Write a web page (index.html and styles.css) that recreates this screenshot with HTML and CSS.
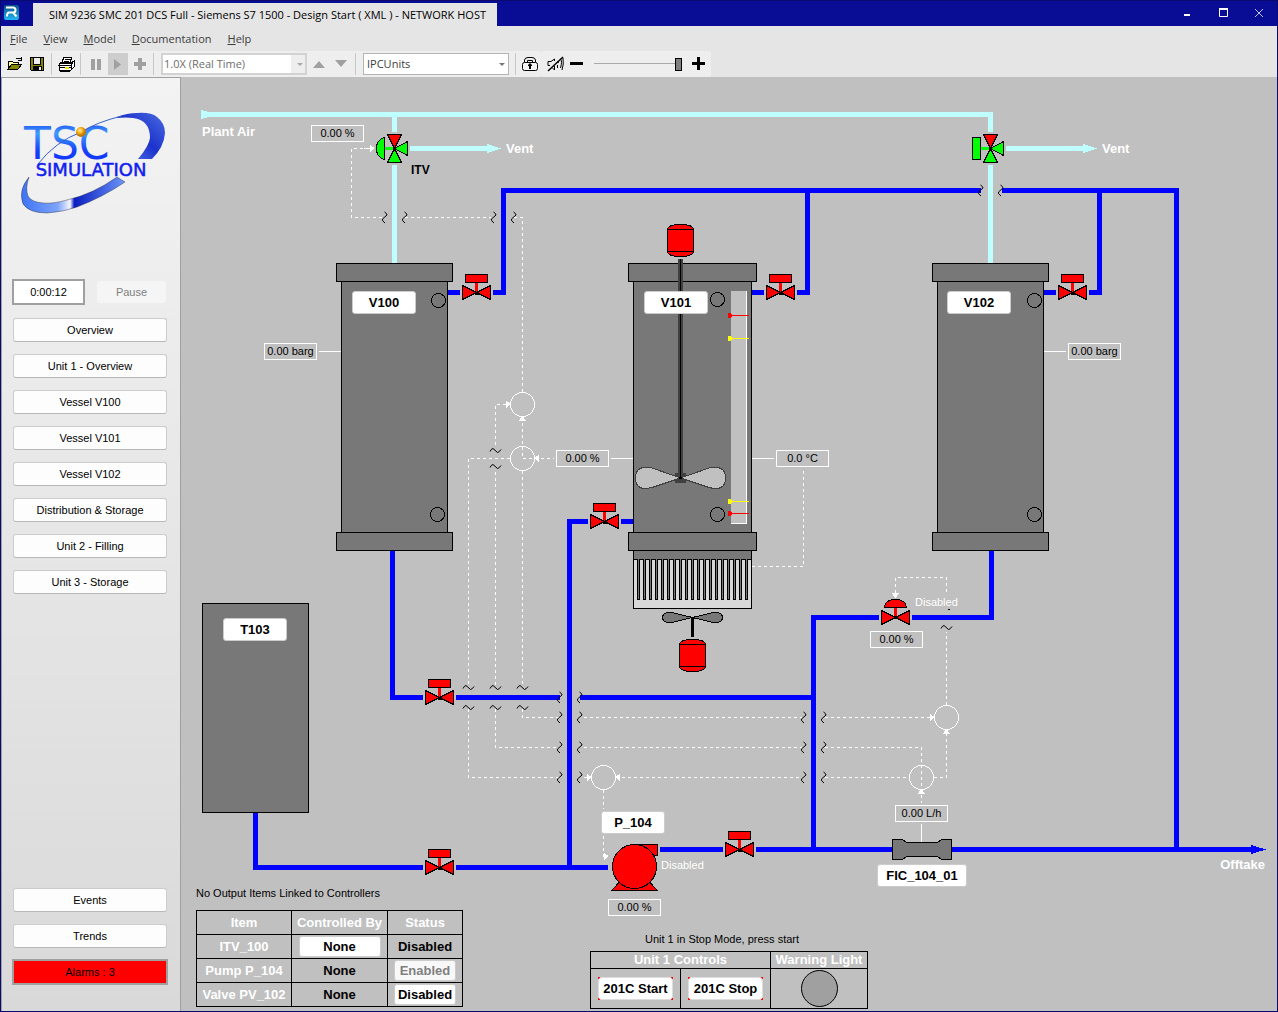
FILE: index.html
```html
<!DOCTYPE html>
<html lang="en">
<head>
<meta charset="utf-8">
<title>SIM 9236 SMC 201 DCS Full</title>
<link rel="stylesheet" href="styles.css">
</head>
<body>
<div class="window">
  <header class="titlebar">
    <svg class="app-icon" width="32" height="23" viewBox="0 0 32 23" aria-hidden="true">
      <defs><linearGradient id="appBlue" x1="0" y1="0" x2="0" y2="1"><stop offset="0" stop-color="#0b4f86"/><stop offset="1" stop-color="#22b8f4"/></linearGradient></defs>
      <rect x="3" y="2" width="15" height="15" rx="2" fill="url(#appBlue)"/>
      <path d="M5 4.500H12Q14.500 4.500 14.500 7T12 9.500L15.500 13.500M12 9.500H8Q6 9.500 6 13.500" fill="none" stroke="#fff" stroke-width="2"/>
    </svg>
    <h1 class="title-tab">SIM 9236 SMC 201 DCS Full - Siemens S7 1500 - Design Start ( XML ) - NETWORK HOST</h1>
    <div class="window-buttons">
      <button type="button" aria-label="Minimize"><svg width="10" height="10"><rect x="2" y="6" width="6" height="2" fill="#fff"/></svg></button>
      <button type="button" aria-label="Maximize"><svg width="10" height="10"><path d="M1.500 1v7.500h8V1" fill="none" stroke="#fff"/><rect x="1" y="0" width="9" height="2" fill="#fff"/></svg></button>
      <button type="button" aria-label="Close"><svg width="10" height="10"><path d="M1 1l8 8M9 1l-8 8" stroke="#c3c4ea" fill="none"/></svg></button>
    </div>
  </header>

  <nav class="menubar" aria-label="Menu">
    <a href="#file"><u>F</u>ile</a>
    <a href="#view"><u>V</u>iew</a>
    <a href="#model"><u>M</u>odel</a>
    <a href="#docs"><u>D</u>ocumentation</a>
    <a href="#help"><u>H</u>elp</a>
  </nav>

  <div class="toolbar-row">
    <div class="toolbar">
      <button class="tool" type="button" aria-label="Open">
        <svg width="16" height="14" shape-rendering="crispEdges"><path d="M1 12V4h4l1 1h5v2" fill="#ffff9c" stroke="#000"/><path d="M1 12l4-5h10l-4 5z" fill="#848400" stroke="#000"/><path d="M9 2q3-2 5 0M14 0v3h-3" fill="none" stroke="#000"/></svg>
      </button>
      <button class="tool" type="button" aria-label="Save">
        <svg width="14" height="14" shape-rendering="crispEdges"><path d="M0 0h14v14H1l-1-1z"/><path d="M1 1h12v12H1z" fill="#848400"/><path d="M3 0h8v8H3zM3 9h9v5H3z"/><rect x="4" y="1" width="6" height="6" fill="#eee"/><rect x="9" y="10" width="2" height="3" fill="#eee"/></svg>
      </button>
      <span class="sep"></span>
      <button class="tool" type="button" aria-label="Print">
        <svg width="18" height="16" shape-rendering="crispEdges"><path d="M5 6l2-5h8l-2 5zM2 7h12l3-2v6l-3 3H2z" fill="#fff" stroke="#000"/><path d="M8 3h5M7 5h5M3 6l13 0M1 9h14M2 11h13M14 7v7M17 5l-3 4" fill="none" stroke="#000"/><path d="M8 12h4" stroke="#e8e800" stroke-width="2"/><path d="M3 15h10" stroke="#000" stroke-width="2"/></svg>
      </button>
      <span class="sep"></span>
      <button class="tool" type="button" aria-label="Pause" disabled>
        <svg width="16" height="16"><path d="M4 3h4v11H4zM10 3h4v11h-4z" fill="#a0a0a0"/></svg>
      </button>
      <button class="tool tool-on" type="button" aria-label="Run" disabled>
        <svg width="16" height="16"><path d="M4 3v11l7-5.500z" fill="#a0a0a0"/></svg>
      </button>
      <button class="tool" type="button" aria-label="Step" disabled>
        <svg width="16" height="16"><path d="M7 2h4v4h4v4h-4v4H7v-4H3V6h4z" fill="#a0a0a0"/></svg>
      </button>
      <span class="sep"></span>
      <span class="combo combo-off">
        <select aria-label="Simulation speed" disabled><option>1.0X (Real Time)</option></select>
        <svg width="7" height="4"><path d="M0 0h6L3 3z" fill="#a8a8a8"/></svg>
      </span>
      <button class="tool" type="button" aria-label="Faster" disabled>
        <svg width="14" height="8"><path d="M1 8h12L7 1z" fill="#a0a0a0"/></svg>
      </button>
      <button class="tool" type="button" aria-label="Slower" disabled>
        <svg width="14" height="8"><path d="M1 0h12L7 7z" fill="#a0a0a0"/></svg>
      </button>
      <span class="sep"></span>
      <span class="combo combo-units">
        <select aria-label="Units"><option>IPCUnits</option></select>
        <svg width="7" height="4"><path d="M0 0h6L3 3z" fill="#777"/></svg>
      </span>
      <span class="sep"></span>
      <button class="tool" type="button" aria-label="Lock">
        <svg width="16" height="16"><path d="M2.500 6.500V4Q3 1.500 6 1.500h4q3 0 3.500 2.500v2.500M5.500 6V4.500h5V6" fill="none" stroke="#000"/><rect x=".5" y="6.500" width="15" height="8" rx="2" fill="#f4f4f4" stroke="#000"/><path d="M6 9l2-2 2 2v1H9v3H7v-3H6z" fill="#000"/></svg>
      </button>
    </div>
    <div class="toolbar volume">
      <button class="tool" type="button" aria-label="Mute">
        <svg width="17" height="16"><path d="M1 15L16 1" stroke="#000" stroke-width="1.500"/><path d="M1 9.500V5.500H4L7.500 3V5M1 9.500H3M7.500 10V14L5.500 12M10.500 9v3M13.500 3q2 2 0 9M16 2q1 6-1 12M10.500 5l1 2" fill="none" stroke="#000"/></svg>
      </button>
      <button class="tool" type="button" aria-label="Volume down">
        <svg width="14" height="14"><path d="M0 5h13v3H0z"/></svg>
      </button>
      <input class="slider" type="range" min="0" max="100" value="100" aria-label="Volume">
      <button class="tool" type="button" aria-label="Volume up">
        <svg width="14" height="14"><path d="M5 0h3v5h5v3H8v5H5V8H0V5h5z"/></svg>
      </button>
    </div>
  </div>

  <div class="work">
    <aside class="sidebar">
      <svg class="logo" width="156" height="110" viewBox="12 108 156 110" role="img" aria-label="TSC Simulation">
        <defs>
          <linearGradient id="ringTop" x1="0" y1="1" x2="1" y2="0"><stop offset="0" stop-color="#5b7ff0"/><stop offset=".5" stop-color="#1c33cc"/><stop offset="1" stop-color="#4b6ce0"/></linearGradient>
          <linearGradient id="ringLow" x1="0" x2="1"><stop offset="0" stop-color="#3e74f4"/><stop offset=".35" stop-color="#7ea4fa"/><stop offset=".47" stop-color="#f4f7ff"/><stop offset=".51" stop-color="#0a1ec0"/><stop offset="1" stop-color="#6c96fa"/></linearGradient>
          <linearGradient id="letters" x1="0" y1="0" x2="0" y2="1"><stop offset="0" stop-color="#1030f0"/><stop offset=".3" stop-color="#3f9cff"/><stop offset=".65" stop-color="#1440f8"/><stop offset="1" stop-color="#1030ff"/></linearGradient>
          <radialGradient id="orb" cx=".4" cy=".35"><stop offset="0" stop-color="#fff0b0"/><stop offset=".5" stop-color="#ffb820"/><stop offset="1" stop-color="#c07800"/></radialGradient>
        </defs>
        <path d="M117 117Q127 113 137 113Q151 112 157 117Q165 123 165 133Q164 147 152 159H138Q149 146 150 138Q150 120 133 118Q126 117 117 118z" fill="url(#ringTop)"/>
        <path d="M29 177Q18 190 23 204Q29 213 47 213Q63 212 77 207Q103 197 125 182L117 177Q93 194 67 200Q53 204 43 203Q31 202 28 196Q25 188 29 177z" fill="url(#ringLow)" stroke="#223" stroke-width=".4"/>
        <text class="logo-big" x="24" y="159" fill="url(#letters)">TSC</text>
        <path d="M38 164Q55 142 81 132Q97 122 122 116" fill="none" stroke="#3a62c8" stroke-width="1"/>
        <circle cx="81" cy="132" r="5" fill="url(#orb)"/>
        <text class="logo-small" x="91" y="176" text-anchor="middle">SIMULATION</text>
      </svg>
      <div class="clock-row">
        <output class="clock">0:00:12</output>
        <button class="side-btn pause" type="button" disabled>Pause</button>
      </div>
      <nav class="side-nav" aria-label="Displays">
        <button class="side-btn" type="button">Overview</button>
        <button class="side-btn" type="button">Unit 1 - Overview</button>
        <button class="side-btn" type="button">Vessel V100</button>
        <button class="side-btn" type="button">Vessel V101</button>
        <button class="side-btn" type="button">Vessel V102</button>
        <button class="side-btn" type="button">Distribution &amp; Storage</button>
        <button class="side-btn" type="button">Unit 2 - Filling</button>
        <button class="side-btn" type="button">Unit 3 - Storage</button>
      </nav>
      <div class="side-nav side-foot">
        <button class="side-btn" type="button">Events</button>
        <button class="side-btn" type="button">Trends</button>
      </div>
      <button class="alarms" type="button">Alarms : 3</button>
    </aside>

    <main class="canvas">
      <div class="mimic">
        <svg class="drawing" width="1096" height="934" viewBox="181 77 1096 934" shape-rendering="crispEdges">
          <defs>
            <g id="bowtie" stroke="#000" fill="#f00"><path d="M-14-7V7L0 0zM14-7V7L0 0z"/></g>
            <g id="valve">
              <path d="M0 0V-10" stroke="#f00" stroke-width="3"/>
              <use href="#bowtie"/>
              <rect x="-11" y="-18" width="22" height="8" fill="#f00" stroke="#000"/>
              <rect x="-2" y="-1" width="4" height="3"/>
            </g>
            <g id="threeway" stroke="#000">
              <path d="M-10 0H0" stroke="#0f0" stroke-width="3"/>
              <path d="M-7-14H7L0 0z" fill="#f00"/>
              <path d="M-7 14H7L0 0zM13-7V7L0 0z" fill="#0f0"/>
              <rect x="-1" y="-1" width="2" height="3"/>
            </g>
            <g id="motor" stroke="#000" fill="#f00">
              <path d="M0 5Q0 3 4 1Q8 0 13 0T22 1Q26 3 26 5V27Q26 29 22 31Q18 32 13 32T4 31Q0 29 0 27z"/>
              <path d="M0 5H26M0 27H26"/>
            </g>
            <path id="brkV" d="M0-5.500Q2.500-4 2.500-2.500L-2 1.500Q-3 3 .5 5.500" fill="none" stroke="#000" shape-rendering="auto"/>
            <path id="brkH" d="M-5.500 1Q-4-2-2.500-2L2 2Q3.500 2 5.500-1" fill="none" stroke="#000" shape-rendering="auto"/>
            <path id="tipR" d="M0-3V4L5 0z" fill="#fff"/>
            <path id="tipL" d="M0-3V4L-5 0z" fill="#fff"/>
            <path id="tipU" d="M-4 0H4L0-5z" fill="#fff"/>
            <path id="tipD" d="M-4 0H4L0 5z" fill="#fff"/>
            <pattern id="fins" x="637" y="559" width="6" height="60" patternUnits="userSpaceOnUse">
              <rect width="3" height="41" fill="#000"/><rect x="1" width="1" height="40" fill="#787878"/><rect x="3" width="3" height="1" fill="#000"/>
            </pattern>
          </defs>

          <!-- compressed air -->
          <g class="air">
            <path d="M204 114.500H990.500V132M394.500 114.500V132M394.500 165V263M990.500 165V263M410 148.500H488M1006 148.500H1084"/>
            <path class="air-tip" d="M201 110L209 112V117L201 119zM487 144L501 148.500L487 153zM1083 144L1097 148.500L1083 153z"/>
          </g>

          <!-- liquid lines -->
          <g class="liquid">
            <path d="M448 292.500H460M493 292.500H503.500V190.500H981M752 292.500H764M797 292.500H807.500V190"/>
            <path d="M1002 190.500H1176.500V849M1044 292.500H1056M1089 292.500H1099.500V190"/>
            <path d="M392.500 551V697.500H423M456 697.500H560M580 697.500H813"/>
            <path d="M255.500 813V867.500H423M456 867.500H608M569.500 867V521.500H588M621 521.500H633"/>
            <path d="M991.500 551V617.500H912M879 617.500H813.500V849M660 849.500H723M756 849.500H892M952 849.500H1252"/>
            <path class="liquid-tip" d="M1251 845L1266 849.500L1251 854z"/>
          </g>

          <!-- control signals -->
          <g class="signal">
            <path d="M369 148.500H351.500V217.500H383M405 217.500H491M514 217.500H522.500V392"/>
            <path d="M495.500 445V404.500H508M522.500 417V458.500H554M510 458.500H468.500V686M495.500 472V686M522.500 471V686"/>
            <path d="M522.500 709V717.500H559M495.500 709V747.500H559M468.500 709V777.500H559"/>
            <path d="M584 717.500H802M584 747.500H802M584 777.500H591M616 777.500H802"/>
            <path d="M825 717.500H934M825 747.500H921.500V803M825 777.500H909M934 777.500H946.500V730"/>
            <path d="M946.500 705V632M946.500 592V577.500H895.500V594M603.500 790V809M603.500 836V856.500H606"/>
            <path d="M803.500 471V566.500H752"/>
          </g>
          <path class="link" d="M319 351.500H341M1044 351.500H1066M611 458.500H633M752 458.500H774M921.500 824V842M364 148.500H370"/>
          <g class="link">
            <circle cx="522.500" cy="404.500" r="12"/><circle cx="522.500" cy="458.500" r="12"/>
            <circle cx="603.500" cy="777.500" r="12"/><circle cx="921.500" cy="777.500" r="12"/><circle cx="946.500" cy="717.500" r="12"/>
          </g>
          <use href="#tipR" x="370" y="148"/><use href="#tipR" x="506" y="404"/><use href="#tipR" x="587" y="777"/>
          <use href="#tipR" x="930" y="717"/><use href="#tipR" x="604" y="856"/>
          <use href="#tipL" x="539" y="458"/><use href="#tipL" x="620" y="777"/>
          <use href="#tipU" x="522.500" y="421"/><use href="#tipU" x="921.500" y="794"/><use href="#tipU" x="946.500" y="734"/>
          <use href="#tipD" x="895.500" y="593"/>

          <use href="#brkV" x="384.500" y="217.500"/><use href="#brkV" x="404.500" y="217.500"/>
          <use href="#brkV" x="493.500" y="217.500"/><use href="#brkV" x="513.500" y="217.500"/>
          <use href="#brkV" x="980.500" y="190.500"/><use href="#brkV" x="1000.500" y="190.500"/>
          <use href="#brkV" x="559.500" y="697.500"/><use href="#brkV" x="579.500" y="697.500"/>
          <use href="#brkV" x="559.500" y="717.500"/><use href="#brkV" x="579.500" y="717.500"/>
          <use href="#brkV" x="559.500" y="747.500"/><use href="#brkV" x="579.500" y="747.500"/>
          <use href="#brkV" x="559.500" y="777.500"/><use href="#brkV" x="579.500" y="777.500"/>
          <use href="#brkV" x="803.500" y="717.500"/><use href="#brkV" x="823.500" y="717.500"/>
          <use href="#brkV" x="803.500" y="747.500"/><use href="#brkV" x="823.500" y="747.500"/>
          <use href="#brkV" x="803.500" y="777.500"/><use href="#brkV" x="823.500" y="777.500"/>
          <use href="#brkH" x="495.500" y="450.500"/><use href="#brkH" x="495.500" y="466.500"/>
          <use href="#brkH" x="468.500" y="687.500"/><use href="#brkH" x="495.500" y="687.500"/><use href="#brkH" x="522.500" y="687.500"/>
          <use href="#brkH" x="468.500" y="707.500"/><use href="#brkH" x="495.500" y="707.500"/><use href="#brkH" x="522.500" y="707.500"/>
          <use href="#brkH" x="946.500" y="627.500"/><rect x="948" y="609" width="2" height="1"/>

          <!-- vessels -->
          <g class="vessel">
            <rect x="341.500" y="281.500" width="106" height="251"/><rect x="336.500" y="263.500" width="116" height="18"/><rect x="336.500" y="532.500" width="116" height="18"/>
            <circle cx="438.500" cy="300.500" r="7"/><circle cx="437.500" cy="514.500" r="7"/>
            <rect x="633.500" y="281.500" width="118" height="278"/><rect x="628.500" y="263.500" width="128" height="18"/><rect x="628.500" y="532.500" width="128" height="18"/>
            <circle cx="717.500" cy="299.500" r="7"/><circle cx="717.500" cy="514.500" r="7"/>
            <rect x="937.500" y="281.500" width="106" height="251"/><rect x="932.500" y="263.500" width="116" height="18"/><rect x="932.500" y="532.500" width="116" height="18"/>
            <circle cx="1034.500" cy="300.500" r="7"/><circle cx="1034.500" cy="514.500" r="7"/>
            <rect x="202.500" y="603.500" width="106" height="209"/>
          </g>

          <!-- level gauge with its alarm limits -->
          <rect x="731" y="291" width="16" height="233" fill="#c0c0c0"/>
          <path d="M746.500 291V523.500H731" fill="none" stroke="#fff"/>
          <path d="M728 315.500H749M728 513.500H749" stroke="#f00"/><path d="M728 313h2l3 2v1l-3 2h-2zM728 511h2l3 2v1l-3 2h-2z" fill="#f00"/>
          <path d="M728 338.500H749M728 501.500H749" stroke="#ff0"/><path d="M728 336h2l3 2v1l-3 2h-2zM728 499h2l3 2v1l-3 2h-2z" fill="#ff0"/>

          <!-- agitator -->
          <path d="M680.500 478L652 468Q648 467.500 645 467.500C638 467.500 635.500 472 635.500 478S638 488.500 645 488.500Q648 488.500 652 487.500zM680.500 478L709 468Q713 467.500 716 467.500C723 467.500 725.500 472 725.500 478S723 488.500 716 488.500Q713 488.500 709 487.500z" fill="#c0c0c0" stroke="#404040"/>
          <path d="M675 473h11v3l-4 2l4 2v3h-11v-3l4-2l-4-2z" fill="#404040"/>
          <rect x="678" y="259" width="5" height="219" fill="#404040"/><rect x="680" y="259" width="1" height="219"/><rect x="679" y="477" width="3" height="2"/>
          <use href="#motor" x="667.500" y="224.500"/>

          <!-- heater fins and fan -->
          <rect x="633.500" y="559.500" width="118" height="49" fill="#d9d9d9" stroke="#000"/>
          <rect x="637" y="559" width="111" height="41" fill="url(#fins)"/>
          <rect x="691" y="617" width="3" height="20"/>
          <path d="M692.500 617.500L674 613Q662.500 611 662.500 617.500T674 622zM692.500 617.500L711 613Q722.500 611 722.500 617.500T711 622z" fill="#787878" stroke="#000"/>
          <use href="#motor" x="679.500" y="639.500"/>

          <!-- valves -->
          <use href="#valve" x="476.500" y="292.500"/><use href="#valve" x="780.500" y="292.500"/><use href="#valve" x="1072.500" y="292.500"/>
          <use href="#valve" x="604.500" y="521.500"/><use href="#valve" x="439.500" y="697.500"/><use href="#valve" x="439.500" y="867.500"/>
          <use href="#valve" x="739.500" y="849.500"/>
          <path d="M895.500 617V606" stroke="#f00" stroke-width="3"/><use href="#bowtie" x="895.500" y="617.500"/><rect x="894" y="616" width="4" height="3"/>
          <path d="M884.500 607.500Q885 599.500 895.500 599.500T906.500 607.500z" fill="#f00" stroke="#000"/>
          <use href="#threeway" x="394.500" y="148.500"/><path d="M384.500 137.500Q376.500 139.500 376.500 148.500T384.500 159.500z" fill="#0f0" stroke="#000"/>
          <use href="#threeway" x="990.500" y="148.500"/><rect x="972.500" y="137.500" width="8" height="22" fill="#0f0" stroke="#000"/>

          <!-- pump and flow meter -->
          <g fill="#f00" stroke="#000">
            <path d="M634.500 844.500H657.500V855.500H640zM620 881.500L611.500 890.500H657.500L649 881.500z"/><circle cx="634.500" cy="866.500" r="22"/>
          </g>
          <path d="M892.500 839.500H902.500L906.500 842.500H937.500L941.500 839.500H951.500V859.500H941.500L937.500 856.500H906.500L902.500 859.500H892.500z" fill="#787878" stroke="#000"/>

          <g class="label">
            <text x="202" y="136">Plant Air</text><text x="506" y="153">Vent</text><text x="1102" y="153">Vent</text>
            <text x="1265" y="869" text-anchor="end">Offtake</text>
          </g>
          <text class="tag" x="411" y="174">ITV</text>
          <g class="note note-light"><text x="661" y="869">Disabled</text><text x="915" y="606">Disabled</text></g>
          <g class="note"><text x="196" y="897">No Output Items Linked to Controllers</text><text x="645" y="943">Unit 1 in Stop Mode, press start</text></g>
        </svg>

        <button class="plate at-v100" type="button">V100</button>
        <button class="plate at-v101" type="button">V101</button>
        <button class="plate at-v102" type="button">V102</button>
        <button class="plate at-t103" type="button">T103</button>
        <button class="plate at-p104" type="button">P_104</button>
        <button class="plate at-fic" type="button">FIC_104_01</button>

        <output class="reading at-itv">0.00 %</output>
        <output class="reading at-pt100">0.00 barg</output>
        <output class="reading at-lt101">0.00 %</output>
        <output class="reading at-tt101">0.0 °C</output>
        <output class="reading at-pt102">0.00 barg</output>
        <output class="reading at-pv102">0.00 %</output>
        <output class="reading at-ft104">0.00 L/h</output>
        <output class="reading at-pump">0.00 %</output>

        <table class="grid outputs">
          <colgroup><col class="c-item"><col class="c-by"><col class="c-status"></colgroup>
          <tr><th>Item</th><th>Controlled By</th><th>Status</th></tr>
          <tr><th>ITV_100</th><td><button class="cell-btn wide" type="button">None</button></td><td>Disabled</td></tr>
          <tr><th>Pump P_104</th><td>None</td><td><button class="cell-btn" type="button" disabled>Enabled</button></td></tr>
          <tr><th>Valve PV_102</th><td>None</td><td><button class="cell-btn" type="button">Disabled</button></td></tr>
        </table>

        <table class="grid controls">
          <colgroup><col class="c-ctl"><col class="c-ctl"><col class="c-light"></colgroup>
          <tr><th colspan="2">Unit 1 Controls</th><th>Warning Light</th></tr>
          <tr>
            <td><span class="armed"><button class="start-btn" type="button">201C Start</button></span></td>
            <td><span class="armed"><button class="start-btn" type="button">201C Stop</button></span></td>
            <td><span class="lamp" role="img" aria-label="Off"></span></td>
          </tr>
        </table>
      </div>
    </main>
  </div>
</div>
</body>
</html>
```
FILE: styles.css
```css
* { box-sizing: border-box; }
body { margin: 0; font: 11px/14px "Liberation Sans", Arial, sans-serif; color: #000; }
button, select, input { font: inherit; color: inherit; margin: 0; padding: 0; }

.window { display: flex; flex-direction: column; min-height: 100vh; border: 1px solid #0a0a6e; background: #e5e5e5; }

.titlebar { display: flex; align-items: stretch; height: 25px; padding-top: 2px; background: #090c94; }
.app-icon { flex: none; }
.title-tab { margin: 0; padding: 0 11px 0 16px; background: #e5e5e5; font: 11px/24px "Open Sans", "Noto Sans", sans-serif; white-space: nowrap; }
.window-buttons { display: flex; margin-left: auto; }
.window-buttons button { display: grid; place-items: center; width: 36px; height: 20px; border: 0; background: none; }

.menubar { display: flex; gap: 16px; height: 25px; padding: 0 9px; font: 11px/25px "Open Sans", "Noto Sans", sans-serif; }
.menubar a { color: #3c3c3c; text-decoration: none; }

.toolbar-row { display: flex; height: 26px; }
.toolbar { display: flex; align-items: center; padding-left: 3px; background: #eee; border-radius: 3px; }
.volume { padding-right: 1px; }
.tool { display: grid; place-items: center; width: 22px; height: 24px; border: 0; background: none; }
.tool-on { background: #cdcdcd; border-left: 2px solid #eee; height: 22px; }
.sep { width: 1px; height: 22px; margin: 0 3px; background: #c8c8c8; }
.combo { position: relative; width: 146px; height: 22px; margin-left: 4px; }
.combo-off { margin-right: 1px; }
.combo-units { margin-right: 3px; }
.combo select { appearance: none; width: 100%; height: 22px; padding: 0 3px; border: 1px solid #b4b4b4; border-radius: 0; background: #fff; color: #3c3c3c; font: 11px/18px "Open Sans", "Noto Sans", sans-serif; }
.combo-off select { background: linear-gradient(90deg, #fff 128px, #eee 128px); border: 2px solid #d2d2d2; color: #6d6d6d; opacity: 1; padding: 0 1px; }
.combo svg { position: absolute; right: 3px; top: 10px; }
.slider { appearance: none; width: 92px; height: 16px; margin: 0 4px; padding: 0 2px; background: linear-gradient(#a8a8a8, #a8a8a8) 2px 7px / 82px 1px no-repeat; }
.slider::-webkit-slider-thumb { appearance: none; width: 7px; height: 13px; border: 1px solid #000; background: #808080; }

.work { display: flex; flex: 1; }
.sidebar { display: flex; flex-direction: column; flex: none; width: 180px; padding: 30px 12px 26px 10px; border: 1px solid #a0a0a0; border-bottom: 0; background: linear-gradient(#f3f3f3, #d9d9d9); }
.logo { flex: none; }
.logo-big { font: 44px "DejaVu Sans", sans-serif; }
.logo-small { font: 18px "DejaVu Sans", sans-serif; fill: #1020f0; stroke: #1020f0; stroke-width: .5px; }
.clock-row { display: flex; align-items: center; justify-content: space-between; margin-top: 61px; padding-right: 2px; }
.clock { width: 73px; height: 26px; border: 2px solid #a0a0a0; background: #fff; line-height: 22px; text-align: center; }
.side-nav { display: flex; flex-direction: column; gap: 12px; margin-top: 13px; padding: 0 1px; }
.side-foot { margin-top: auto; }
.side-btn { height: 24px; border: 1px solid #ccc; border-bottom-color: #b8b8b8; border-radius: 3px; background: #fdfdfd; }
.pause { width: 69px; height: 22px; border: 0; background: #f5f5f5; color: #808080; }
.alarms { height: 26px; margin-top: 11px; border: 2px solid #a0a0a0; background: #f00; }

.canvas { flex: 1; min-width: 0; background: #c0c0c0; }
.mimic { position: relative; }
.drawing { display: block; }
.air, .liquid { fill: none; stroke-width: 5; }
.air { stroke: #c0ffff; }
.liquid { stroke: #00f; }
.air-tip { fill: #c0ffff; stroke: none; }
.liquid-tip { fill: #00f; stroke: none; }
.signal { fill: none; stroke: #fff; stroke-dasharray: 3 3; }
.link { fill: none; stroke: #fff; }
.vessel { fill: #787878; stroke: #000; }
.label { font-size: 13px; font-weight: bold; fill: #fff; }
.tag { font-size: 12px; font-weight: bold; }
.note { font-size: 11px; }
.note-light { fill: #fff; }

.plate { position: absolute; width: 64px; height: 23px; border: 1px solid #ccc; border-radius: 3px; background: #fff; font-size: 13px; font-weight: bold; }
.at-v100 { left: 171px; top: 214px; }
.at-v101 { left: 463px; top: 214px; }
.at-v102 { left: 766px; top: 214px; }
.at-t103 { left: 42px; top: 541px; }
.at-p104 { left: 420px; top: 734px; }
.at-fic { left: 696px; top: 787px; width: 90px; }

.reading { position: absolute; width: 53px; height: 17px; border: 1px solid #fff; line-height: 15px; text-align: center; white-space: nowrap; }
.at-itv { left: 130px; top: 48px; }
.at-pt100 { left: 83px; top: 266px; }
.at-lt101 { left: 375px; top: 373px; }
.at-tt101 { left: 595px; top: 373px; }
.at-pt102 { left: 887px; top: 266px; }
.at-pv102 { left: 689px; top: 554px; }
.at-ft104 { left: 714px; top: 728px; }
.at-pump { left: 427px; top: 822px; }

.grid { position: absolute; border-collapse: collapse; table-layout: fixed; font-size: 13px; font-weight: bold; text-align: center; }
.grid th, .grid td { height: 24px; padding: 0; border: 1px solid #000; white-space: nowrap; }
.grid th { color: #fff; }
.outputs { left: 15px; top: 833px; width: 267px; }
.c-item { width: 95px; }
.c-by { width: 96px; }
.c-status { width: 75px; }
.controls { left: 409px; top: 874px; width: 278px; }
.c-ctl { width: 90px; }
.c-light { width: 97px; }
.controls th { height: 17px; line-height: 14px; }
.controls td { height: 40px; }
.cell-btn { display: block; width: 62px; height: 21px; margin: 0 auto; border: 1px solid #ccc; border-radius: 3px; background: #fff; }
.cell-btn.wide { width: 82px; }
.cell-btn:disabled { color: #808080; background: #f8f8f8; }
.armed { display: block; width: 75px; height: 23px; margin: 0 auto; background: linear-gradient(#f00, #f00) 0 0 / 2px 2px no-repeat, linear-gradient(#f00, #f00) 100% 0 / 2px 2px no-repeat, linear-gradient(#f00, #f00) 0 100% / 2px 2px no-repeat, linear-gradient(#f00, #f00) 100% 100% / 2px 2px no-repeat; }
.start-btn { width: 75px; height: 23px; border: 1px solid #ddd; border-radius: 4px; background: #fff; }
.lamp { display: block; width: 37px; height: 37px; margin: 0 auto; border: 1px solid #000; border-radius: 50%; background: #a0a0a0; }
```
